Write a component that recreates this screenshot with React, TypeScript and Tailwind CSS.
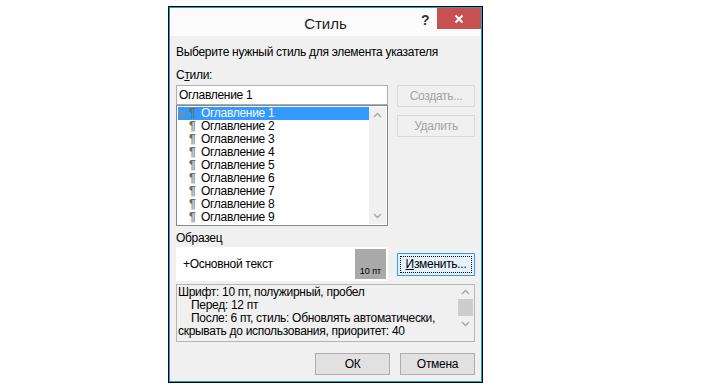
import React from "react";

const font = { fontFamily: '"Liberation Sans", "Noto Sans", sans-serif' };

function ChevUp() {
  return (
    <svg width="9" height="6" viewBox="0 0 9 6">
      <polyline points="1,5 4.5,1.5 8,5" fill="none" stroke="#a6a6a6" strokeWidth="1.4" />
    </svg>
  );
}

function ChevDown() {
  return (
    <svg width="9" height="6" viewBox="0 0 9 6">
      <polyline points="1,1 4.5,4.5 8,1" fill="none" stroke="#a6a6a6" strokeWidth="1.4" />
    </svg>
  );
}

const items = [1, 2, 3, 4, 5, 6, 7, 8, 9];

export default function App() {
  return (
    <div className="w-[708px] h-[390px] bg-white pt-[6px] pl-[168px] text-[12px] tracking-[-0.3px] text-black whitespace-nowrap" style={font}>
      <div className="w-[315px] h-[377px] border border-black">
        <div className="h-full border border-[#1e9fd4] flex flex-col bg-[#f0f0f0]">
          {/* title bar */}
          <div className="h-[28px] bg-[#fbfbfb] relative flex items-center justify-center shrink-0">
            <span className="text-[15px] tracking-normal text-[#222] leading-none mt-[2px]">Стиль</span>
            <span className="absolute left-[251px] top-[2px] text-[14px] font-bold text-[#333]">?</span>
            <div className="absolute right-0 top-0 w-[44px] h-[21px] bg-[#c75050] flex items-center justify-center">
              <svg width="10" height="10" viewBox="0 0 10 10">
                <path d="M1.5 1.5 L8.5 8.5 M8.5 1.5 L1.5 8.5" stroke="#fff" strokeWidth="2" />
              </svg>
            </div>
          </div>

          <div className="px-[6px] flex flex-col">
            <div className="mt-[8px] h-[16px] leading-[16px]">Выберите нужный стиль для элемента указателя</div>
            <div className="mt-[7px] h-[16px] leading-[16px]">
              С<span className="underline">т</span>или:
            </div>

            <div className="mt-[2px] flex gap-[9px]">
              <div className="w-[212px] flex flex-col">
                <div className="h-[20px] bg-white border border-[#abadb3] px-[2px] leading-[18px]">Оглавление 1</div>
                <div className="h-[121px] bg-white border border-[#828790] flex p-[1px]">
                  <div className="flex-1 flex flex-col">
                    {items.map((n) => (
                      <div
                        key={n}
                        className={`h-[13px] leading-[13px] flex items-center ${n === 1 ? "bg-[#3399ff]" : ""}`}
                      >
                        <span className="w-[11px] flex justify-center">
                          {n === 1 && (
                            <svg width="5" height="8" viewBox="0 0 5 8">
                              <path d="M0 0 L5 4 L0 8 Z" fill="#8a8a8a" />
                            </svg>
                          )}
                        </span>
                        <span className="w-[12px] text-[#6b6b6b] font-bold text-[12px]">¶</span>
                        <span className={n === 1 ? "text-[#f8f8f8]" : ""}>Оглавление {n}</span>
                      </div>
                    ))}
                  </div>
                  <div className="w-[17px] flex flex-col items-center justify-between py-[5px] bg-[#f0f0f0]">
                    <ChevUp />
                    <ChevDown />
                  </div>
                </div>
              </div>
              <div className="w-[78px] flex flex-col gap-[8px]">
                <div className="h-[22px] border border-[#d9d9d9] flex items-center justify-center text-[#a3a3a3]">Создать...</div>
                <div className="h-[22px] border border-[#d9d9d9] flex items-center justify-center text-[#a3a3a3]">Удалить</div>
              </div>
            </div>

            <div className="mt-[4px] h-[16px] leading-[16px]">Образец</div>
            <div className="mt-[1px] flex items-center gap-[9px]">
              <div className="w-[212px] h-[34px] bg-white p-[2px] flex">
                <div className="flex-1 flex items-center pl-[5px] text-[12px]">+Основной текст</div>
                <div className="w-[31px] bg-[#a9a9a9] flex items-end justify-center pb-[2px] text-[9px] tracking-normal leading-[11px]">10 пт</div>
              </div>
              <div className="w-[78px] h-[23px] border border-[#3399ff] bg-[#e5f1fb] p-[2px]">
                <div className="h-full border border-dotted border-black flex items-center justify-center">
                  <span>
                    <span className="underline">И</span>зменить...
                  </span>
                </div>
              </div>
            </div>

            <div className="mt-[3px] h-[58px] border border-[#b5b5b5] flex">
              <div className="flex-1 pl-[1px] pt-[1px] leading-[13px] text-[12px] overflow-hidden">
                <div>Шрифт: 10 пт, полужирный, пробел</div>
                <div className="pl-[13px]">Перед: 12 пт</div>
                <div className="pl-[13px]">После: 6 пт, стиль: Обновлять автоматически,</div>
                <div>скрывать до использования, приоритет: 40</div>
              </div>
              <div className="w-[17px] flex flex-col items-center py-[4px] bg-[#f0f0f0]">
                <ChevUp />
                <div className="mt-[4px] w-[15px] h-[17px] bg-[#cdcdcd]" />
                <div className="mt-[5px]">
                  <ChevDown />
                </div>
              </div>
            </div>

            <div className="mt-[11px] flex justify-end gap-[10px]">
              <div className="w-[75px] h-[22px] border border-[#adadad] bg-[#e1e1e1] flex items-center justify-center">ОК</div>
              <div className="w-[75px] h-[22px] border border-[#adadad] bg-[#e1e1e1] flex items-center justify-center">Отмена</div>
            </div>
          </div>
        </div>
      </div>
    </div>
  );
}
